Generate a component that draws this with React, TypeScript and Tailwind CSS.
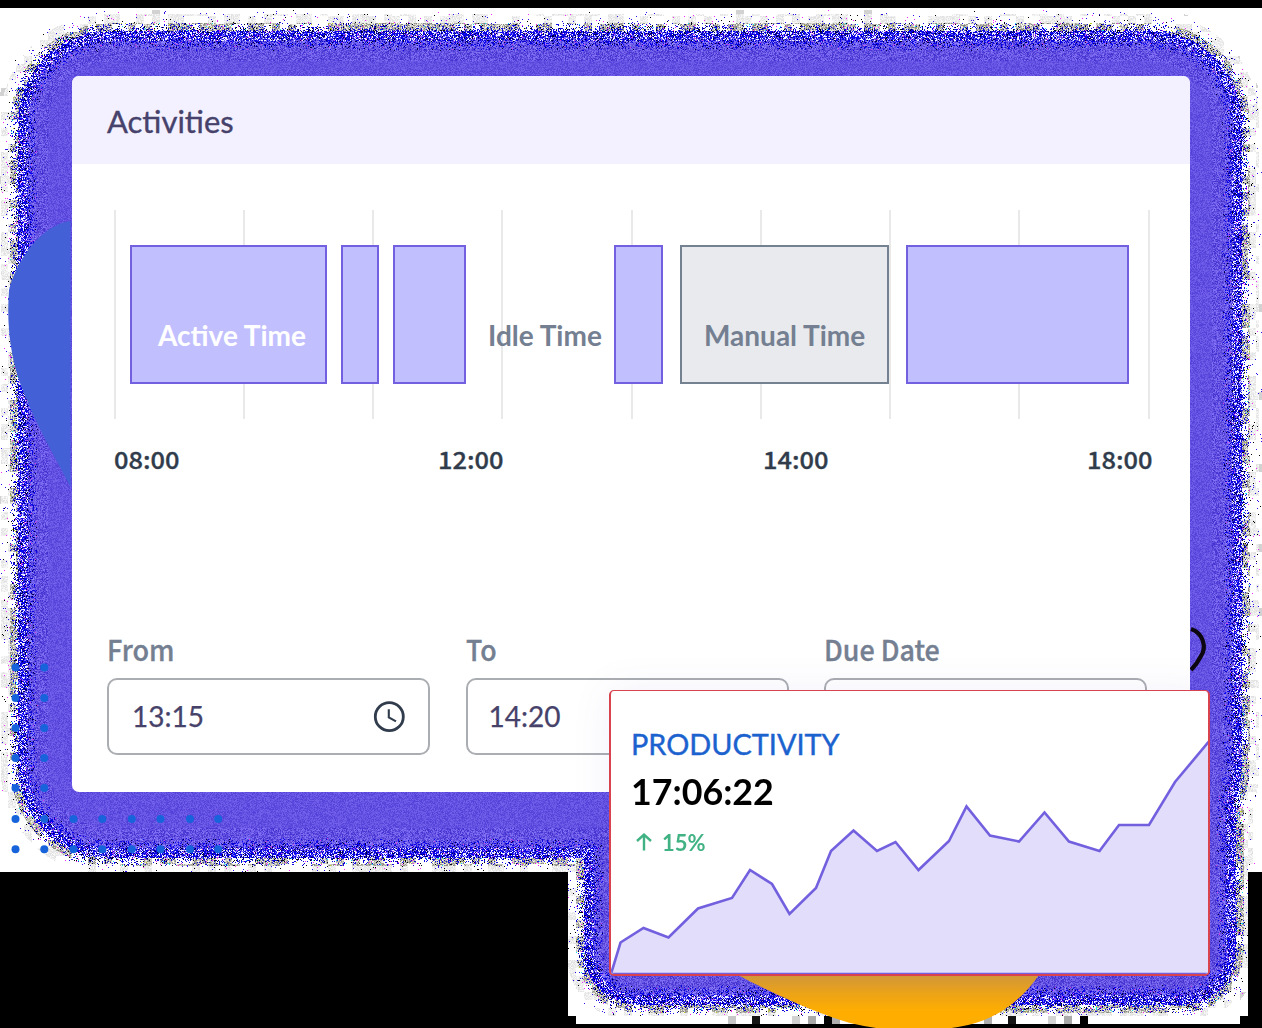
import { useLayoutEffect, useRef } from "react";

const W = 1262;
const H = 1028;

// Signed depth of a point inside a rounded rectangle (positive is inside).
function depth(px: number, py: number, x0: number, y0: number, x1: number, y1: number, r: number) {
  const qx = Math.abs(px - (x0 + x1) / 2) - (x1 - x0) / 2 + r;
  const qy = Math.abs(py - (y0 + y1) / 2) - (y1 - y0) / 2 + r;
  return r - Math.min(Math.max(qx, qy), 0) - Math.hypot(Math.max(qx, 0), Math.max(qy, 0));
}

function paintGlow(ctx: CanvasRenderingContext2D) {
  const img = ctx.createImageData(W, H);
  const data = img.data;
  let seed = 20240611;
  const rnd = () => {
    seed = (Math.imul(seed, 1664525) + 1013904223) >>> 0;
    return (seed >>> 8) / 16777216;
  };
  const blocks = Array.from({ length: 160 * 130 }, () => rnd());
  const lower: Record<number, number> = { 728: 200, 752: 20, 792: 210, 808: 170, 824: 5, 832: 175, 984: 175, 1008: 20, 1048: 212, 1064: 170, 1080: 0 };
  for (let y = 0; y < H; y++) {
    for (let x = 0; x < W; x++) {
      const block = blocks[(y >> 3) * 160 + (x >> 3)];
      const light = y >= 8 && (y < 872 || (x >= 568 && x < 1248 && y < 1016) || (x >= 576 && x < 1240 && y < 1024));
      let c: number[] = light ? [255, 255, 255] : [0, 0, 0];
      const t = Math.max(depth(x, y, 10, 23, 1249, 865, 98), y > 640 ? depth(x, y, 576, 600, 1243, 1012, 60) : -99);
      if (light && y >= 1016) {
        const g = lower[(x >> 3) << 3];
        if (g !== undefined) c = [g, g, g];
      } else if (light && t > -14) {
        const a = rnd();
        const b = rnd();
        if (t < 0) {
          if (block > 0.5 && t > -10) {
            const g = 222 + b * 30;
            c = [g, g, g];
          } else if (block > 0.97) c = [210, 210, 210];
          if (a < 0.04 * (1 + t / 14)) c = b < 0.5 ? [40, 20, 230] : b < 0.8 ? [0, 0, 0] : [240, 40, 250];
        } else if (t < 8) {
          if (a < 0.08 + t * 0.035) c = b < 0.75 ? [15, 10, 225] : [0, 0, 25];
          else if (a > 0.97) c = b < 0.4 ? [250, 30, 240] : b < 0.7 ? [20, 230, 240] : [190, 210, 30];
          else if (block > 0.4) {
            const g = 125 + b * 130;
            c = [g, g, g - 8];
          }
        } else if (a < (t - 12) / 16) {
          const n = (b - 0.5) * (t < 38 ? 70 : 36);
          c = [99 + n, 81 + n, 226 + n * 0.6];
        } else {
          const k = rnd();
          if (k < 0.46) c = [10, 5, 195 + b * 60];
          else if (k < 0.7) c = t < 18 ? [240, 240, 255] : [145, 135, 255];
          else if (k < 0.81) c = [0, 0, 40 + b * 70];
          else if (k < 0.975) c = [115, 100, 250];
          else c = [210, 60, 230];
        }
      }
      const i = (y * W + x) * 4;
      data[i] = c[0];
      data[i + 1] = c[1];
      data[i + 2] = c[2];
      data[i + 3] = 255;
    }
  }
  ctx.putImageData(img, 0, 0);
}

function Backdrop() {
  const ref = useRef<HTMLCanvasElement>(null);
  useLayoutEffect(() => {
    const ctx = ref.current?.getContext("2d");
    if (ctx) paintGlow(ctx);
  }, []);
  const columns = [15.5, 44.3, 73.5, 102.3, 131.8, 160.5, 190, 218.2];
  const rows = [667.5, 698, 728, 758, 788, 819, 849.3];
  return (
    <div className="absolute inset-0" aria-hidden="true">
      <canvas ref={ref} width={W} height={H} className="absolute inset-0" />
      <svg className="absolute inset-0" width={W} height={H} viewBox="0 0 1262 1028">
        <defs>
          <linearGradient id="amber" x1="0" y1="975" x2="0" y2="1012" gradientUnits="userSpaceOnUse">
            <stop offset="0" stopColor="#d69a35" />
            <stop offset="0.5" stopColor="#efa516" />
            <stop offset="1" stopColor="#ffae00" />
          </linearGradient>
        </defs>
        <path d="M70.5 221C45 224 18 255 9 290C6 330 12 365 24 393C36 425 53 453 70.5 487Z" fill="#4360d6" />
        <path d="M738 975C781 998 819 1014 850 1023Q904 1036 958 1027Q1010 1019 1041 972Z" fill="url(#amber)" />
        <path d="M1191 629C1203 633 1207 647 1201 656Q1197 664 1191 670" fill="none" stroke="#0c0710" strokeWidth="4.2" />
        {rows.map((y, r) =>
          columns.filter((_, i) => r > 4 || i < 2).map((x) => <circle key={`${x}-${y}`} cx={x} cy={y} r="4" fill="#1763db" />),
        )}
      </svg>
    </div>
  );
}

const gridLines = Array.from({ length: 9 }, (_, i) => i);

function Timeline() {
  return (
    <div className="relative mt-[46px] h-[209px]">
      <div className="absolute inset-y-0 left-[41.5px] flex w-[1036px] justify-between">
        {gridLines.map((i) => (
          <div key={i} className="w-[2px] bg-[#e9e9ea]" />
        ))}
      </div>
      <div className="relative flex h-[174px] items-end pl-[58px] text-[28px] leading-[34px] font-bold">
        <Block className="w-[197px] border-[#7260e0] bg-[#c2bfff] pl-[7px] text-white">
          <Fit w={148}>Active Time</Fit>
        </Block>
        <Block className="ml-[14px] w-[38px] border-[#7260e0] bg-[#c2bfff]" />
        <Block className="ml-[14px] w-[73px] border-[#7260e0] bg-[#c2bfff]" />
        <div className="flex h-[139px] w-[148px] items-end justify-center pb-[32px] pl-[10px] text-[#748091]">
          <Fit w={114}>Idle Time</Fit>
        </div>
        <Block className="w-[49px] border-[#7260e0] bg-[#c2bfff]" />
        <Block className="ml-[17px] w-[209px] border-[#748190] bg-[#e8eaed] text-[#748091]">
          <Fit w={161}>Manual Time</Fit>
        </Block>
        <Block className="ml-[17px] w-[223px] border-[#7260e0] bg-[#c2bfff]" />
      </div>
    </div>
  );
}

function Block({ className, children }: { className: string; children?: React.ReactNode }) {
  return <div className={`flex h-[139px] items-end justify-center border-2 pb-[30px] ${className}`}>{children}</div>;
}

// Renders a text run horizontally scaled to an exact width.
function Fit({ w, children }: { w: number; children: React.ReactNode }) {
  const ref = useRef<HTMLSpanElement>(null);
  useLayoutEffect(() => {
    const apply = () => {
      const el = ref.current;
      if (el) el.style.transform = `scaleX(${w / el.offsetWidth})`;
    };
    apply();
    document.fonts?.ready.then(apply);
  }, [w]);
  return (
    <span className="block whitespace-nowrap" style={{ width: w }}>
      <span ref={ref} className="inline-block origin-left">
        {children}
      </span>
    </span>
  );
}

function Field({ label, labelWidth, value, icon }: { label: string; labelWidth: number; value?: string; icon?: boolean }) {
  return (
    <div className="w-[323px]">
      <div className="h-[46px] font-['Noto_Sans_CJK_SC',sans-serif] text-[28px] leading-[34px] font-medium text-[#748091] [-webkit-text-stroke:0.35px_#748091]">
        <Fit w={labelWidth}>{label}</Fit>
      </div>
      <div className={`flex h-[77px] items-center justify-between rounded-[10px] border-2 border-[#aaadb1] pr-[23px] text-[28px] text-[#46426a] ${icon ? "pl-[22px]" : "pl-[20px]"}`}>
        {value && (
          <div className="pb-[2px] pl-px leading-[34px] [-webkit-text-stroke:0.25px_#46426a]">
            <Fit w={72}>{value}</Fit>
          </div>
        )}
        {icon && (
          <svg width="32" height="32" viewBox="0 0 32 32" fill="none" stroke="#303b4c">
            <circle cx="16.3" cy="15.7" r="14" strokeWidth="2.8" />
            <path d="M15.8 8.2V16.3L23 20.3" strokeWidth="2.1" />
          </svg>
        )}
      </div>
    </div>
  );
}

function Productivity() {
  return (
    <section className="absolute top-[690px] left-[609px] h-[286px] w-[601px] overflow-hidden rounded-[5px] border-2 border-t-[1.5px] border-[#d8434f] bg-white shadow-[0_0_40px_rgba(90,80,190,0.08)]">
      <svg className="absolute -top-px -left-[2px]" width="601" height="286" viewBox="609 690 601 286">
        <path d="M611 974L620.5 942.5L643.5 928L668.5 937.5L698 908.5L732 898L750 870L772 884L789.5 914L816 888L831 851L853.5 830.5L877 851L895.5 842L918.5 870L949 841L966.5 806.5L990 835.5L1019 841.5L1044.5 812.5L1069 841.5L1099.5 851L1119 825L1149 825L1175 782L1211 739V974Z" fill="#e1ddfb" stroke="#7260df" strokeWidth="2.6" />
      </svg>
      <div className="relative pt-[36px] pl-[20px]">
        <h2 className="text-[29px] leading-[34px] text-[#1b62cf] [-webkit-text-stroke:0.4px_#1b62cf]">
          <Fit w={209}>PRODUCTIVITY</Fit>
        </h2>
        <div className="mt-[8px] text-[36px] leading-[44px] font-bold text-black">
          <Fit w={143}>17:06:22</Fit>
        </div>
        <div className="mt-[15px] flex items-center pl-[5px] text-[23px] leading-[28px] font-bold text-[#41b283]">
          <svg width="16" height="18" viewBox="0 0 16 18" fill="none" stroke="currentColor" strokeWidth="2.4">
            <path d="M8 17.5V2M1 8L8 1.6L15 8" />
          </svg>
          <div className="ml-[10px]">
            <Fit w={44}>15%</Fit>
          </div>
        </div>
      </div>
    </section>
  );
}

export default function App() {
  return (
    <main className="relative h-[1028px] w-[1262px] overflow-hidden bg-black px-[72px] pt-[76px] font-[Lato,sans-serif]">
      <Backdrop />
      <section className="relative h-[716px] w-[1118px] overflow-hidden rounded-[7px] bg-white">
        <header className="h-[88px] bg-[#f3f1ff] pt-[27px] pl-[35px] text-[30px] leading-[36px] text-[#46426b] [-webkit-text-stroke:0.35px_#46426b]">
          <Fit w={127}>Activities</Fit>
        </header>
        <Timeline />
        <div className="mt-[22px] flex justify-between pr-[37px] pl-[41.5px] font-['Noto_Sans_CJK_SC',sans-serif] text-[23.5px] leading-[36px] font-medium text-[#303c4b] [-webkit-text-stroke:0.3px_#303c4b]">
          {["08:00", "12:00", "14:00", "18:00"].map((time) => (
            <Fit key={time} w={66}>
              {time}
            </Fit>
          ))}
        </div>
        <div className="mt-[155px] flex gap-[35.5px] pl-[35px]">
          <Field label="From" labelWidth={67.5} value="13:15" icon />
          <Field label="To" labelWidth={30.5} value="14:20" />
          <Field label="Due Date" labelWidth={116} />
        </div>
      </section>
      <Productivity />
    </main>
  );
}
